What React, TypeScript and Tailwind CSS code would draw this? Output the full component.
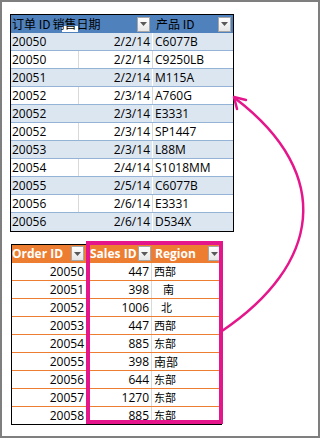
import React from 'react';

const ordersTop = [
  ['20050', '2/2/14', 'C6077B'],
  ['20050', '2/2/14', 'C9250LB'],
  ['20051', '2/2/14', 'M115A'],
  ['20052', '2/3/14', 'A760G'],
  ['20052', '2/3/14', 'E3331'],
  ['20052', '2/3/14', 'SP1447'],
  ['20053', '2/3/14', 'L88M'],
  ['20054', '2/4/14', 'S1018MM'],
  ['20055', '2/5/14', 'C6077B'],
  ['20056', '2/6/14', 'E3331'],
  ['20056', '2/6/14', 'D534X'],
];

const salesBottom = [
  { id: '20050', sales: '447', region: '西部', cls: '' },
  { id: '20051', sales: '398', region: '南', cls: 'pl-[11px]' },
  { id: '20052', sales: '1006', region: '北', cls: 'pl-[9px]' },
  { id: '20053', sales: '447', region: '西部', cls: '' },
  { id: '20054', sales: '885', region: '东部', cls: '' },
  { id: '20055', sales: '398', region: '南部', cls: 'text-[12px]' },
  { id: '20056', sales: '644', region: '东部', cls: '' },
  { id: '20057', sales: '1270', region: '东部', cls: '' },
  { id: '20058', sales: '885', region: '东部', cls: '' },
];

function DropBtn() {
  return (
    <div className="w-[13px] h-[15px] shrink-0 border border-[#a6a6a6] bg-gradient-to-b from-white to-[#e6e6e6] flex items-center justify-center">
      <svg width="7" height="4" viewBox="0 0 7 4">
        <path d="M0 0 L7 0 L3.5 4 Z" fill="#595959" />
      </svg>
    </div>
  );
}

function TopTable() {
  return (
    <div className="w-[224px] border border-black bg-white">
      <div className="relative grid grid-cols-[68px_74px_80px] h-[18px] bg-[#4f81bd] text-black text-[12px] leading-[18px]">
        {/* little white edit box under the header text */}
        <div className="absolute left-[51px] top-[11px] w-[16px] h-[6px] bg-white" />
        <div className="relative col-span-2 flex items-center justify-between pl-[1px] pr-[3px]">
          <span className="font-['Noto_Sans_CJK_SC',sans-serif]">
            订单 ID<span className="ml-[2px]">销售日期</span>
          </span>
          <DropBtn />
        </div>
        <div className="flex items-center justify-between pl-[3px] pr-[2px]">
          <span className="font-['Noto_Sans_CJK_SC',sans-serif]">产品 ID</span>
          <DropBtn />
        </div>
      </div>
      {ordersTop.map((r, i) => {
        const blue = i % 2 === 0;
        const last = i === ordersTop.length - 1;
        return (
          <div
            key={i}
            className={`grid grid-cols-[68px_74px_80px] h-[18px] text-[12px] leading-[17px] text-black ${blue ? 'bg-[#dce6f1]' : 'bg-white'} ${last ? '' : 'border-b border-[#95b3d7]'}`}
          >
            <div className={`pl-[1px] border-r ${blue ? 'border-transparent' : 'border-[#d9d9d9]'}`}>{r[0]}</div>
            <div className={`text-right pr-[2px] border-r ${blue ? 'border-white' : 'border-[#d9d9d9]'}`}>{r[1]}</div>
            <div className="pl-[2px]">{r[2]}</div>
          </div>
        );
      })}
    </div>
  );
}

function BottomTable() {
  return (
    <div className="w-[211px] border border-black bg-white">
      <div className="grid grid-cols-[76px_64px_69px] h-[17px] bg-[#ed7d31] text-white font-bold text-[12px] leading-[17px]">
        <div className="flex items-center justify-between pr-[4px]">
          <span>Order ID</span>
          <DropBtn />
        </div>
        <div className="flex items-center justify-between pl-[2px] pr-[1px]">
          <span>Sales ID</span>
          <DropBtn />
        </div>
        <div className="flex items-center justify-between pl-[3px]">
          <span>Region</span>
          <DropBtn />
        </div>
      </div>
      {salesBottom.map((r, i) => (
        <div
          key={i}
          className="grid grid-cols-[76px_64px_69px] h-[18px] text-[12px] leading-[17px] text-black border-t border-[#ed7d31]"
        >
          <div className="text-right pr-[4px]">{r.id}</div>
          <div className="text-right pr-[2px] border-r border-[#d9d9d9]">{r.sales}</div>
          <div className={`pl-[2px] text-[11px] font-['Noto_Sans_CJK_SC',sans-serif] ${r.cls}`}>{r.region}</div>
        </div>
      ))}
    </div>
  );
}

export default function App() {
  return (
    <div className="relative w-[320px] h-[438px] border-2 border-[#7f7f7f] bg-white overflow-hidden font-['Open_Sans','Noto_Sans_CJK_SC',sans-serif]">
      <div className="flex flex-col pt-[12px] pl-[8px]">
        <TopTable />
        <div className="mt-[12px] ml-[1px]">
          <BottomTable />
        </div>
      </div>
      {/* highlight box over the lookup columns */}
      <div className="absolute left-[84px] top-[239px] w-[137px] h-[183px] border-4 border-[#e5168b]" />
      <svg className="absolute -left-[2px] -top-[2px] pointer-events-none" width="320" height="438" viewBox="0 0 320 438">
        <path d="M222 331 C320 265 335 175 236 99" fill="none" stroke="#e5168b" strokeWidth="2.5" strokeLinecap="round" />
        <path d="M246 100 L234 97 L237 109" fill="none" stroke="#e5168b" strokeWidth="2.5" strokeLinecap="round" strokeLinejoin="round" />
      </svg>
    </div>
  );
}
